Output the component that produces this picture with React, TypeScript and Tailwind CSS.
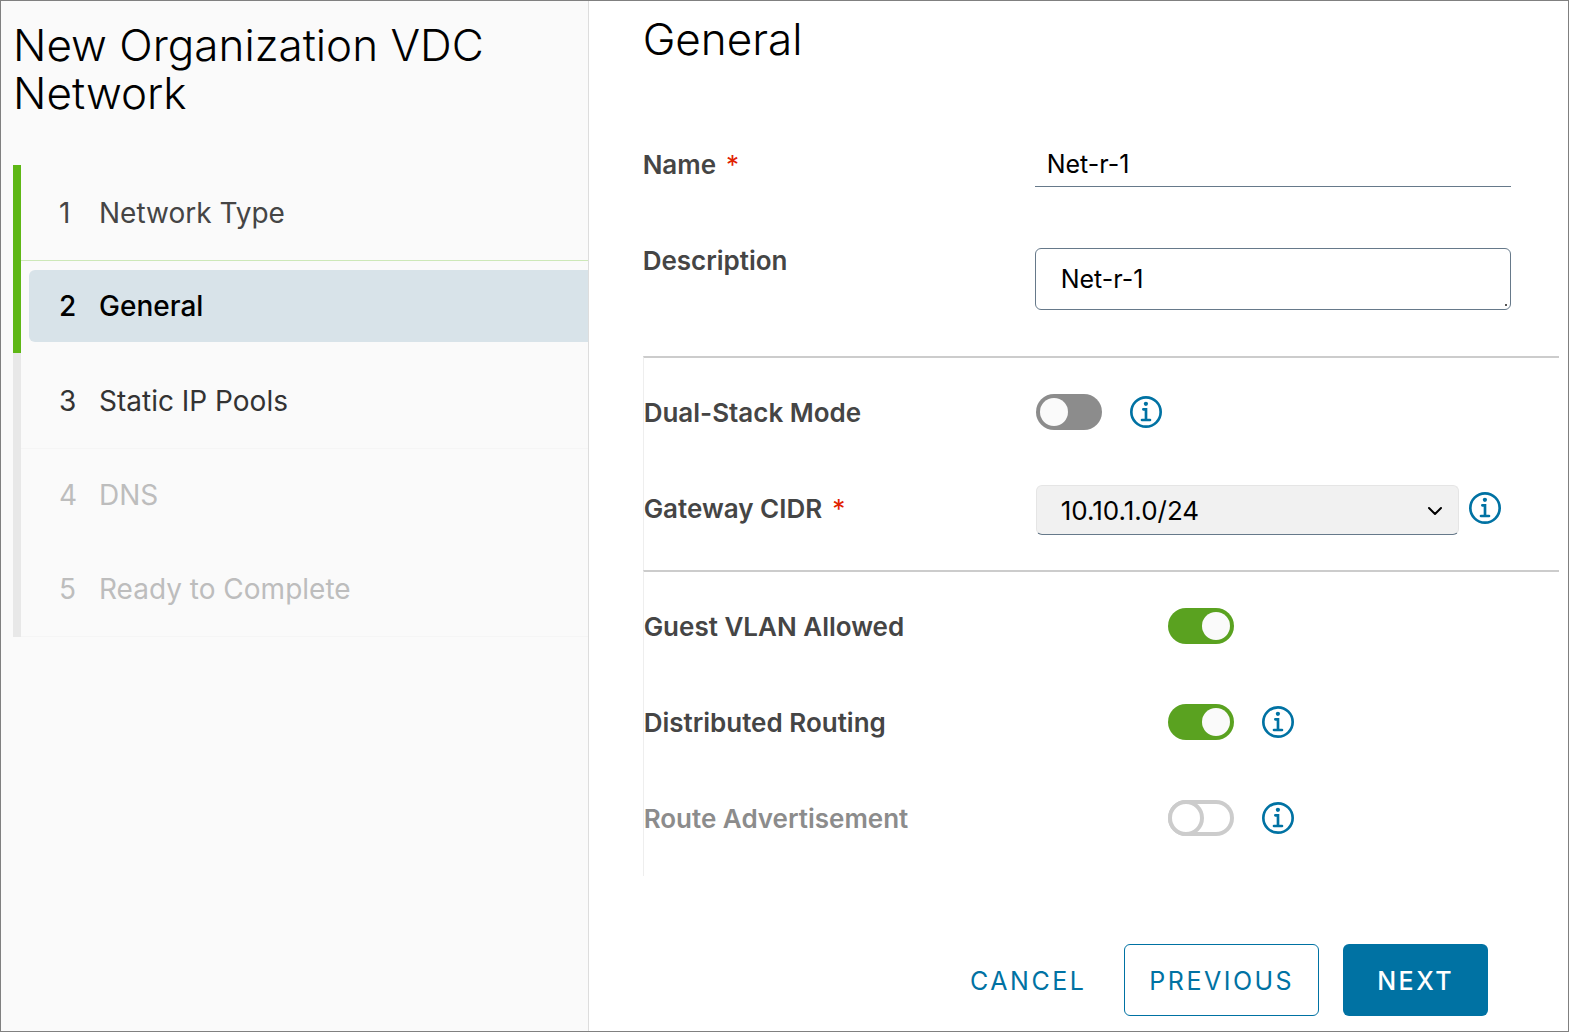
import { useState } from "react";
import { ChevronDown } from "lucide-react";

const steps = [
  { id: 1, label: "Network Type", status: "complete" },
  { id: 2, label: "General", status: "current" },
  { id: 3, label: "Static IP Pools", status: "next" },
  { id: 4, label: "DNS", status: "disabled" },
  { id: 5, label: "Ready to Complete", status: "disabled" },
];

const stepStyles: Record<string, string> = {
  complete: "text-[#454545] border-[#5eb715]",
  current: "text-black font-medium border-[#5eb715]",
  next: "text-[#333333] border-[#e8e8e8]",
  disabled: "text-[#bdbdbd] border-[#e8e8e8]",
};

function InfoButton({ label }: { label: string }) {
  return (
    <button type="button" aria-label={label} className="shrink-0 text-[#0072a3]">
      <svg viewBox="6 6 24 24" fill="currentColor" className="size-8" aria-hidden="true">
        <circle cx="17.93" cy="11.9" r="1.6" />
        <path d="M21,23H19V15H16a1,1,0,0,0,0,2h1v6H15a1,1,0,1,0,0,2h6a1,1,0,0,0,0-2Z" />
        <path d="M18,6A12,12,0,1,0,30,18,12,12,0,0,0,18,6Zm0,22A10,10,0,1,1,28,18,10,10,0,0,1,18,28Z" />
      </svg>
    </button>
  );
}

function Toggle({ id, checked, disabled, onChange }: { id: string; checked: boolean; disabled?: boolean; onChange?: () => void }) {
  return (
    <input
      type="checkbox"
      role="switch"
      id={id}
      checked={checked}
      disabled={disabled}
      readOnly={!onChange}
      onChange={onChange}
      className="h-9 w-[66px] shrink-0 appearance-none rounded-full bg-[#8c8c8c] p-1 before:block before:size-7 before:rounded-full before:bg-[#fafafa] checked:bg-[#5aa220] checked:before:translate-x-[30px] disabled:bg-transparent disabled:p-0 disabled:inset-ring-4 disabled:inset-ring-[#cccccc] disabled:before:size-9 disabled:before:border-4 disabled:before:border-[#cccccc] disabled:before:bg-white"
    />
  );
}

function FieldLabel({ htmlFor, required, children }: { htmlFor: string; required?: boolean; children: string }) {
  return (
    <label htmlFor={htmlFor} className="flex h-24 w-[392px] shrink-0 items-center gap-2.5 font-semibold text-[#454545]">
      {children}
      {required && <span className="font-normal text-[#e12200]">*</span>}
    </label>
  );
}

export default function App() {
  const [name, setName] = useState("Net-r-1");
  const [description, setDescription] = useState("Net-r-1");
  const [dualStack, setDualStack] = useState(false);
  const [guestVlan, setGuestVlan] = useState(true);
  const [distributed, setDistributed] = useState(true);

  return (
    <div className="flex min-h-screen border border-[#808080] bg-white font-['Inter','Liberation_Sans',sans-serif] text-[26px] text-black">
      <aside className="w-3/8 shrink-0 border-r border-[#dddddd] bg-[#fafafa]">
        <h1 className="px-3 pt-5 text-[44px] leading-12 font-light">New Organization VDC Network</h1>
        <nav className="mt-12 pl-3">
          <ol>
            {steps.map((step) => (
              <li key={step.id} className={`border-l-8 ${stepStyles[step.status]}`}>
                {step.status === "current" ? (
                  <div className="h-[92px] pt-[9px] pl-2">
                    <button type="button" aria-current="step" className="flex h-[72px] w-full items-center rounded-l-md bg-[#d8e3e9] pl-[30px] text-[28px]">
                      <span className="w-10 text-left">{step.id}</span>
                      {step.label}
                    </button>
                  </div>
                ) : (
                  <button
                    type="button"
                    disabled={step.status === "disabled"}
                    className={`flex w-full items-center pl-[38px] text-[28px] ${step.id === 4 ? "h-[92px]" : "h-24 border-b"} ${step.status === "complete" ? "border-[#cde8b8]" : "border-[#f5f5f5]"}`}
                  >
                    <span className="w-10 text-left">{step.id}</span>
                    {step.label}
                  </button>
                )}
              </li>
            ))}
          </ol>
        </nav>
      </aside>

      <main className="flex min-w-0 grow flex-col">
        <form className="flex grow flex-col" onSubmit={(e) => e.preventDefault()}>
          <div className="pr-[9px] pl-[54px]">
            <h2 className="pt-3.5 pb-[53px] text-[44px] leading-12 font-light">General</h2>

            <div className="flex items-center pr-12">
              <FieldLabel htmlFor="name" required>Name</FieldLabel>
              <input
                id="name"
                type="text"
                value={name}
                onChange={(e) => setName(e.target.value)}
                className="h-[46px] min-w-0 grow border-b border-[#66798a] px-3 text-[25px] outline-none"
              />
            </div>

            <div className="flex min-h-36 items-start pr-12">
              <FieldLabel htmlFor="description">Description</FieldLabel>
              <div className="relative mt-9 flex min-w-0 grow">
                <textarea
                  id="description"
                  rows={1}
                  value={description}
                  onChange={(e) => setDescription(e.target.value)}
                  className="h-[62px] w-full resize-none rounded-md border border-[#66798a] px-[25px] py-3 text-[25px] leading-9 outline-none"
                />
                <span className="absolute right-1 bottom-1 size-0.5 bg-[#555555]" />
              </div>
            </div>

            <section className="border-t-2 border-l border-t-[#cccccc] border-l-[#eeeeee] pt-1.5 pb-3.5">
              <div className="flex items-center">
                <FieldLabel htmlFor="dualStack">Dual-Stack Mode</FieldLabel>
                <Toggle id="dualStack" checked={dualStack} onChange={() => setDualStack(!dualStack)} />
                <span className="ml-7 flex"><InfoButton label="About dual-stack mode" /></span>
              </div>
              <div className="flex items-center pr-[58px]">
                <FieldLabel htmlFor="gateway" required>Gateway CIDR</FieldLabel>
                <div className="relative mt-1 mr-2.5 min-w-0 grow">
                  <select
                    id="gateway"
                    className="h-[50px] w-full appearance-none rounded-md border border-[#e5e5e5] border-b-[#66798a] bg-[#f1f1f1] px-6 outline-none"
                  >
                    <option>10.10.1.0/24</option>
                  </select>
                  <ChevronDown className="pointer-events-none absolute top-3.5 right-3 size-6 text-black" />
                </div>
                <InfoButton label="About gateway CIDR" />
              </div>
            </section>

            <section className="border-t-2 border-l border-t-[#cccccc] border-l-[#eeeeee] pt-1.5 pb-2.5">
              <div className="flex items-center">
                <label htmlFor="guestVlan" className="flex h-24 w-[524px] items-center font-semibold text-[#454545]">Guest VLAN Allowed</label>
                <Toggle id="guestVlan" checked={guestVlan} onChange={() => setGuestVlan(!guestVlan)} />
              </div>
              <div className="flex items-center">
                <label htmlFor="distributed" className="flex h-24 w-[524px] items-center font-semibold text-[#454545]">Distributed Routing</label>
                <Toggle id="distributed" checked={distributed} onChange={() => setDistributed(!distributed)} />
                <span className="ml-7 flex"><InfoButton label="About distributed routing" /></span>
              </div>
              <div className="flex items-center">
                <label htmlFor="routeAdv" className="flex h-24 w-[524px] items-center font-semibold text-[#8c8c8c]">Route Advertisement</label>
                <Toggle id="routeAdv" checked={false} disabled />
                <span className="ml-7 flex"><InfoButton label="About route advertisement" /></span>
              </div>
            </section>
          </div>

          <footer className="mt-auto flex justify-end gap-6 pt-6 pr-20 pb-[15px] text-[25px] tracking-widest">
            <button type="button" className="h-[72px] px-3.5 pt-1 text-[#0072a3]">CANCEL</button>
            <button type="button" className="h-[72px] rounded-md border border-[#0072a3] px-6 pt-1 text-[#0072a3]">PREVIOUS</button>
            <button type="submit" className="h-[72px] rounded-md bg-[#0072a3] px-[34px] pt-1 font-medium text-white">NEXT</button>
          </footer>
        </form>
      </main>
    </div>
  );
}
